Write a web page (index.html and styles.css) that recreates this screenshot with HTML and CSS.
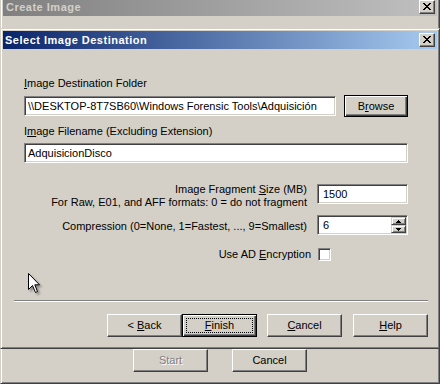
FILE: index.html
```html
<!DOCTYPE html>
<html>
<head>
<meta charset="utf-8">
<link rel="stylesheet" href="styles.css">
</head>
<body>
<div class="win bgwin">
  <div class="titlebar inactive">
    <span class="title">Create Image</span>
    <span class="tbtn"><svg width="8" height="7" viewBox="0 0 8 7" shape-rendering="crispEdges"><path d="M0 0h2v1h-2zM6 0h2v1h-2zM1 1h2v1h-2zM5 1h2v1h-2zM2 2h4v1h-4zM3 3h2v1h-2zM2 4h4v1h-4zM1 5h2v1h-2zM5 5h2v1h-2zM0 6h2v1h-2zM6 6h2v1h-2z" fill="#000"/></svg></span>
  </div>
  <div class="bg-body">
    <div class="btn disabled"><span>Start</span></div>
    <div class="btn"><span>Cancel</span></div>
  </div>
</div>

<div class="win dialog">
  <div class="titlebar active">
    <span class="title">Select Image Destination</span>
    <span class="tbtn"><svg width="8" height="7" viewBox="0 0 8 7" shape-rendering="crispEdges"><path d="M0 0h2v1h-2zM6 0h2v1h-2zM1 1h2v1h-2zM5 1h2v1h-2zM2 2h4v1h-4zM3 3h2v1h-2zM2 4h4v1h-4zM1 5h2v1h-2zM5 5h2v1h-2zM0 6h2v1h-2zM6 6h2v1h-2z" fill="#000"/></svg></span>
  </div>
  <div class="dlg-body">
    <div class="form">
      <div class="lbl"><u>I</u>mage Destination Folder</div>
      <div class="row1">
        <div class="edit wide">\\DESKTOP-8T7SB60\Windows Forensic Tools\Adquisición</div>
        <div class="btn default browse"><span>B<u>r</u>owse</span></div>
      </div>
      <div class="lbl lbl2">I<u>m</u>age Filename (Excluding Extension)</div>
      <div class="edit full">AdquisicionDisco</div>

      <div class="opt frag">
        <div class="olbl">Image Fragment <u>S</u>ize (MB)<br>For Raw, E01, and AFF formats: 0 = do not fragment</div>
        <div class="edit num">1500</div>
      </div>
      <div class="opt comp">
        <div class="olbl">Compression (0=None, 1=Fastest, ..., 9=Smallest)</div>
        <div class="edit num spin">
          <span class="spinval">6</span>
          <span class="spinbtns">
            <span class="sbtn"><svg width="5" height="3" viewBox="0 0 5 3" shape-rendering="crispEdges"><path d="M2 0h1v1h-1zM1 1h3v1h-3zM0 2h5v1h-5z" fill="#000"/></svg></span>
            <span class="sbtn"><svg width="5" height="3" viewBox="0 0 5 3" shape-rendering="crispEdges"><path d="M0 0h5v1h-5zM1 1h3v1h-3zM2 2h1v1h-1z" fill="#000"/></svg></span>
          </span>
        </div>
      </div>
      <div class="opt enc">
        <div class="olbl">Use AD <u>E</u>ncryption</div>
        <div class="check"></div>
      </div>
    </div>

    <div class="footer">
      <div class="sep"></div>
      <div class="buttons">
        <div class="btn"><span>&lt; <u>B</u>ack</span></div>
        <div class="btn default focus"><span class="focusrect"><span><u>F</u>inish</span></span></div>
        <div class="btn cancel"><span><u>C</u>ancel</span></div>
        <div class="btn help"><span><u>H</u>elp</span></div>
      </div>
    </div>
  </div>
</div>

<svg class="cursor" width="14" height="22" viewBox="0 0 14 22">
  <path d="M0.5 0.5 V16.5 L4.5 12.5 L7.5 19.5 L9.5 18.5 L6.8 11.8 H11.5 Z" fill="#fff" stroke="#000" stroke-width="1" stroke-linejoin="miter"/>
</svg>
</body>
</html>
```

FILE: styles.css
```css
html, body {
  margin: 0;
  padding: 0;
}
body {
  width: 446px;
  height: 384px;
  overflow: hidden;
  background: #ffffff;
  font-family: "Liberation Sans", Arial, sans-serif;
  font-size: 11px;
  color: #000;
  position: relative;
}

u {
  text-decoration: underline;
  text-underline-offset: 1px;
}

/* classic window frame */
.win {
  box-sizing: border-box;
  width: 440px;
  background: #d4d0c8;
  border: 1px solid;
  border-color: #d4d0c8 #404040 #404040 #d4d0c8;
  box-shadow: inset 1px 1px #ffffff, inset -1px -1px #808080;
  padding: 2px;
  display: flex;
  flex-direction: column;
}

.bgwin {
  height: 389px;
  margin-top: -5px;
}

.dialog {
  position: absolute;
  left: 0;
  top: 28px;
  height: 321px;
}

.titlebar {
  height: 18px;
  flex: none;
  display: flex;
  align-items: center;
  justify-content: space-between;
  padding: 0 2px 0 2px;
}
.titlebar .title {
  font-weight: bold;
  font-size: 11px;
  letter-spacing: 0.5px;
  line-height: 18px;
  white-space: nowrap;
}
.titlebar.active {
  background: linear-gradient(to right, #0a246a, #a6caf0);
}
.titlebar.active .title {
  color: #ffffff;
}
.titlebar.inactive {
  background: linear-gradient(to right, #808080, #c0c0c0);
  padding-left: 3px;
}
.titlebar.inactive .title {
  color: #d4d0c8;
}

.tbtn {
  box-sizing: border-box;
  width: 16px;
  height: 14px;
  background: #d4d0c8;
  border: 1px solid;
  border-color: #ffffff #404040 #404040 #ffffff;
  box-shadow: inset -1px -1px #808080;
  display: flex;
  align-items: center;
  justify-content: center;
  padding: 0 1px 1px 0;
}
.tbtn svg {
  display: block;
}

/* buttons */
.btn {
  box-sizing: border-box;
  width: 75px;
  height: 23px;
  flex: none;
  background: #d4d0c8;
  border: 1px solid;
  border-color: #ffffff #404040 #404040 #ffffff;
  box-shadow: inset -1px -1px #808080;
  display: flex;
  align-items: center;
  justify-content: center;
  line-height: 13px;
  white-space: pre;
}
.btn.default {
  border-color: #000;
  box-shadow: inset 1px 1px #ffffff, inset -1px -1px #404040, inset -2px -2px #808080;
}
.btn.disabled {
  color: #808080;
  text-shadow: 1px 1px #ffffff;
}
.focusrect {
  box-sizing: border-box;
  width: 67px;
  height: 15px;
  border: 1px dotted #000;
  display: flex;
  align-items: center;
  justify-content: center;
}

/* background window body */
.bg-body {
  flex: 1;
  display: flex;
  align-items: flex-end;
  justify-content: center;
  gap: 24px;
  padding-bottom: 9px;
}

/* dialog body */
.dlg-body {
  flex: 1;
  display: flex;
  flex-direction: column;
  padding: 0 9px 9px 11px;
}

.form {
  padding: 28px 20px 0 10px;
  display: flex;
  flex-direction: column;
}

.lbl {
  line-height: 13px;
  height: 13px;
  white-space: nowrap;
}
.lbl2 {
  margin-top: 8px;
}

.row1 {
  margin-top: 5px;
  display: flex;
  align-items: center;
  height: 22px;
}

.edit {
  box-sizing: border-box;
  height: 20px;
  background: #ffffff;
  border: 1px solid;
  border-color: #808080 #ffffff #ffffff #808080;
  box-shadow: inset 1px 1px #404040, inset -1px -1px #d4d0c8;
  padding: 0 3px;
  line-height: 18px;
  white-space: nowrap;
  overflow: hidden;
}
.edit.wide {
  width: 312px;
}
.browse {
  width: 64px;
  height: 22px;
  margin-left: 8px;
}
.edit.full {
  margin-top: 5px;
  width: 384px;
}

.opt {
  display: flex;
  gap: 10px;
}
.olbl {
  width: 283px;
  flex: none;
  text-align: right;
  line-height: 13px;
  white-space: nowrap;
}
.edit.num {
  width: 91px;
  padding-left: 5px;
}

.frag {
  margin-top: 20px;
  align-items: flex-start;
}
.frag .edit {
  margin-top: 1px;
}

.comp {
  margin-top: 6px;
  align-items: center;
}
.comp .olbl {
  padding-top: 3px;
}

.spin {
  display: flex;
  align-items: stretch;
  padding-right: 1px;
}
.spinval {
  flex: 1;
}
.spinbtns {
  display: flex;
  flex-direction: column;
  width: 15px;
  padding: 1px 0;
}
.sbtn {
  box-sizing: border-box;
  flex: 1;
  background: #d4d0c8;
  border: 1px solid;
  border-color: #d4d0c8 #404040 #404040 #d4d0c8;
  box-shadow: inset 1px 1px #ffffff, inset -1px -1px #808080;
  display: flex;
  align-items: center;
  justify-content: center;
}
.sbtn svg {
  display: block;
}

.enc {
  margin-top: 13px;
  align-items: center;
  gap: 7px;
}
.enc .olbl {
  width: 287px;
}
.check {
  box-sizing: border-box;
  width: 13px;
  height: 13px;
  background: #ffffff;
  border: 1px solid;
  border-color: #808080 #ffffff #ffffff #808080;
  box-shadow: inset 1px 1px #404040, inset -1px -1px #d4d0c8;
}

.footer {
  margin-top: auto;
  display: flex;
  flex-direction: column;
}
.sep {
  border-top: 1px solid #808080;
  border-bottom: 1px solid #ffffff;
  height: 0;
  margin-bottom: 12px;
}
.buttons {
  display: flex;
  justify-content: flex-end;
}
.btn.cancel {
  margin-left: 10px;
}
.btn.help {
  margin-left: 11px;
}

.cursor {
  position: absolute;
  left: 28px;
  top: 273px;
  filter: drop-shadow(2px 2px 1px rgba(0, 0, 0, 0.35));
}
```
